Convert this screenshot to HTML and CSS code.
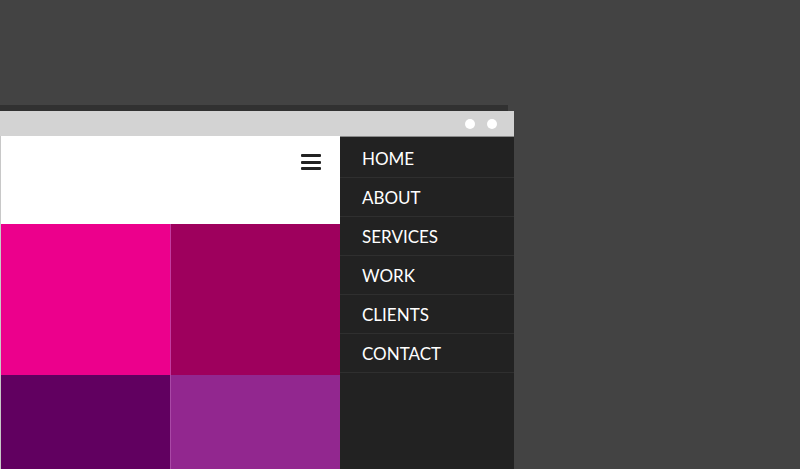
FILE: index.html
```html
<!DOCTYPE html>
<html>
<head>
<meta charset="utf-8">
<link rel="stylesheet" href="styles.css">
</head>
<body>
<div class="window">
  <div class="shadow"></div>
  <div class="titlebar">
    <span class="dot"></span>
    <span class="dot"></span>
  </div>
  <div class="body">
    <div class="main">
      <div class="header">
        <div class="burger"><span></span><span></span><span></span></div>
      </div>
      <div class="tiles">
        <div class="tile t1"></div>
        <div class="tile t2"></div>
        <div class="tile t3"></div>
        <div class="tile t4"></div>
      </div>
    </div>
    <nav class="menu">
      <a class="item">HOME</a>
      <a class="item">ABOUT</a>
      <a class="item">SERVICES</a>
      <a class="item">WORK</a>
      <a class="item">CLIENTS</a>
      <a class="item">CONTACT</a>
    </nav>
  </div>
</div>
</body>
</html>
```
FILE: styles.css
```css
html, body {
  margin: 0;
  padding: 0;
  background: #434343;
  height: 469px;
  overflow: hidden;
}
.window {
  padding-top: 105px;
  width: 514px;
}
.shadow {
  width: 508px;
  height: 6px;
  background: #313131;
}
.titlebar {
  height: 25px;
  background: #d3d3d3;
  display: flex;
  justify-content: flex-end;
  align-items: center;
  gap: 12px;
  padding-right: 17px;
}
.dot {
  width: 10px;
  height: 10px;
  border-radius: 50%;
  background: #fff;
}
.body {
  display: flex;
  height: 333px;
  overflow: hidden;
}
.main {
  width: 339px;
  border-left: 1px solid #c8c8c8;
  display: flex;
  flex-direction: column;
  overflow: hidden;
}
.header {
  flex: none;
  height: 88px;
  background: #fff;
  display: flex;
  justify-content: flex-end;
  align-items: flex-start;
  padding: 18px 19px 0 0;
  box-sizing: border-box;
}
.burger {
  display: flex;
  flex-direction: column;
  gap: 3.5px;
}
.burger span {
  width: 20px;
  height: 3px;
  background: #222;
  border-radius: 1px;
}
.tiles {
  flex: 1;
  display: grid;
  grid-template-columns: 169px 170px;
  grid-template-rows: 151px 1fr;
}
.t1 { background: #ec008c; }
.t2 { background: #9e005d; border-left: 1px solid #c43aa0; }
.t3 { background: #610060; }
.t4 { background: #92278f; border-left: 1px solid #a948a6; }
.menu {
  width: 174px;
  background: #222;
  border-top: 1px solid #8a8a8a;
  padding-top: 2px;
  display: flex;
  flex-direction: column;
  box-sizing: border-box;
}
.item {
  height: 38px;
  border-bottom: 1px solid #2f2f2f;
  display: flex;
  align-items: center;
  padding-left: 22px;
  color: #fff;
  font-family: Lato, "Open Sans", sans-serif;
  font-size: 17px;
}
```
